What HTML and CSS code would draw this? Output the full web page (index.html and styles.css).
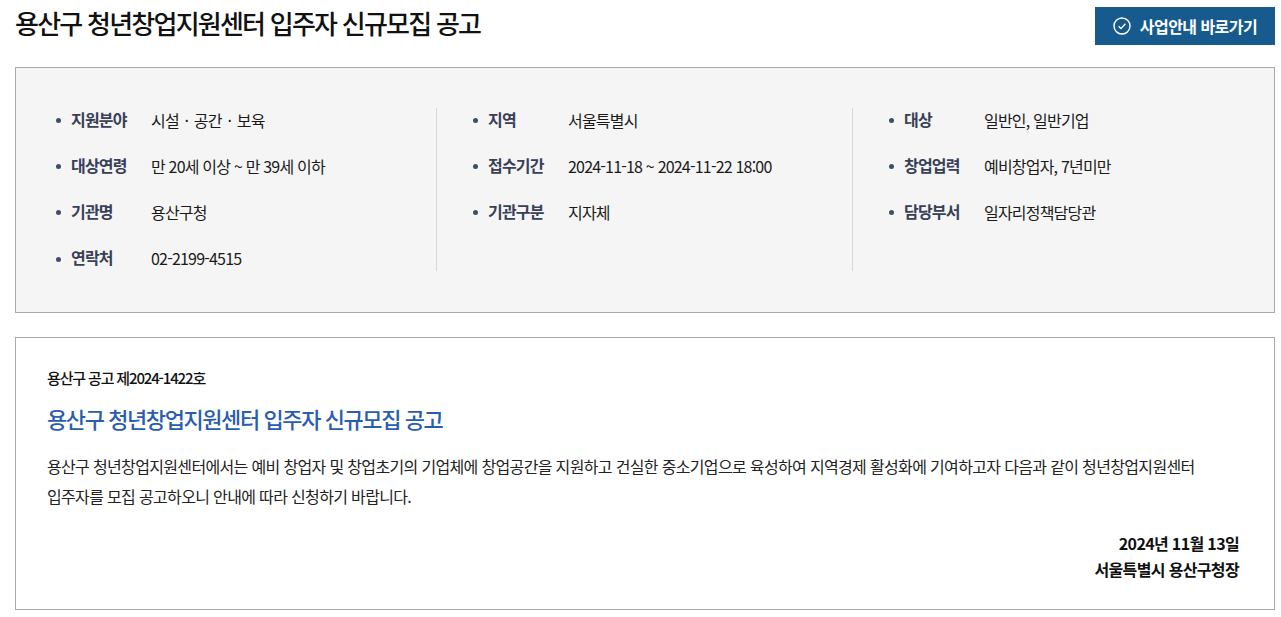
FILE: index.html
```html
<!DOCTYPE html>
<html lang="ko">
<head>
<meta charset="utf-8">
<title>용산구 청년창업지원센터 입주자 신규모집 공고</title>
<link rel="stylesheet" href="styles.css">
</head>
<body>
<header class="head">
  <h1 class="title">용산구 청년창업지원센터 입주자 신규모집 공고</h1>
  <a class="go" href="#"><svg class="go-icon" width="18" height="18" viewBox="0 0 18 18" fill="none" stroke="#fff" stroke-width="1.4"><circle cx="9" cy="9" r="8"/><path d="M5.6 9.3l2.4 2.3 4.4-4.8"/></svg>사업안내 바로가기</a>
</header>
<section class="info">
  <ul class="col col-a">
    <li class="row"><span class="k">지원분야</span><span class="v v-dots">시설 · 공간 · 보육</span></li>
    <li class="row"><span class="k">대상연령</span><span class="v">만 20세 이상 ~ 만 39세 이하</span></li>
    <li class="row"><span class="k">기관명</span><span class="v">용산구청</span></li>
    <li class="row"><span class="k">연락처</span><span class="v">02-2199-4515</span></li>
  </ul>
  <ul class="col col-b">
    <li class="row"><span class="k">지역</span><span class="v">서울특별시</span></li>
    <li class="row"><span class="k">접수기간</span><span class="v">2024-11-18 ~ 2024-11-22 18:00</span></li>
    <li class="row"><span class="k">기관구분</span><span class="v">지자체</span></li>
  </ul>
  <ul class="col col-c">
    <li class="row"><span class="k">대상</span><span class="v">일반인, 일반기업</span></li>
    <li class="row"><span class="k">창업업력</span><span class="v">예비창업자, 7년미만</span></li>
    <li class="row"><span class="k">담당부서</span><span class="v">일자리정책담당관</span></li>
  </ul>
</section>
<section class="notice">
  <p class="no">용산구 공고 제2024-1422호</p>
  <h2 class="sub">용산구 청년창업지원센터 입주자 신규모집 공고</h2>
  <p class="body">용산구 청년창업지원센터에서는 예비 창업자 및 창업초기의 기업체에 창업공간을 지원하고 건실한 중소기업으로 육성하여 지역경제 활성화에 기여하고자 다음과 같이 청년창업지원센터 입주자를 모집 공고하오니 안내에 따라 신청하기 바랍니다.</p>
  <p class="sign">2024년 11월 13일<br>서울특별시 용산구청장</p>
</section>
</body>
</html>
```
FILE: styles.css
```css
* { box-sizing: border-box; }
html, body { margin: 0; padding: 0; }
body {
  padding: 0 6px 0 15px;
  background: #fff;
  color: #111;
  font-family: "Noto Sans CJK KR", "Noto Sans", sans-serif;
  letter-spacing: -0.05em;
}
.head { display: flex; justify-content: space-between; align-items: flex-start; padding-top: 7px; height: 67px; }
.title { margin: -1px 0 0; font-size: 26px; line-height: 34px; font-weight: 500; letter-spacing: -1.76px; color: #111; }
.go {
  display: flex; align-items: center; justify-content: center; gap: 9px;
  width: 180px; height: 38px; background: #175a8e; color: #fff;
  font-size: 16px; font-weight: 700; letter-spacing: -0.55px; text-decoration: none;
}
.info {
  display: flex; height: 246px; padding: 40px 0 41px;
  background: #f5f5f5; border: 1px solid #aaa;
}
.col { list-style: none; margin: 0; padding: 0 0 0 36px; border-right: 1px solid #d8d8d8; }
.col-a { flex: 0 0 421px; padding-left: 40px; }
.col-b { flex: 0 0 416px; }
.col-c { flex: 1; border-right: 0; }
.row { display: flex; height: 46.2px; align-items: flex-start; position: relative; font-size: 16px; line-height: 24px; }
.row::before {
  content: ""; position: absolute; left: 0; top: 10px; width: 5px; height: 5px;
  border-radius: 50%; background: #3f4c6b;
}
.k { flex: 0 0 95px; padding-left: 15px; margin-top: -1.5px; font-weight: 700; color: #374056; }
.v { color: #1a1a1a; margin-top: -0.5px; }
.v-dots { word-spacing: 2px; }
.notice {
  margin-top: 24px; height: 273px; padding: 30px 35px 0 31px; border: 1px solid #aaa;
}
.no { margin: 0; font-size: 15px; line-height: 20px; font-weight: 500; letter-spacing: -1.15px; color: #111; }
.sub { margin: 15px 0 0; font-size: 22px; line-height: 30px; font-weight: 500; letter-spacing: -1.42px; color: #2a5db0; }
.body { margin: 18px 40px 0 0; font-size: 16px; line-height: 30px; letter-spacing: -0.66px; color: #222; }
.sign { margin: 19px 0 0; text-align: right; font-size: 16px; line-height: 26px; font-weight: 700; letter-spacing: -0.65px; color: #111; }
```
